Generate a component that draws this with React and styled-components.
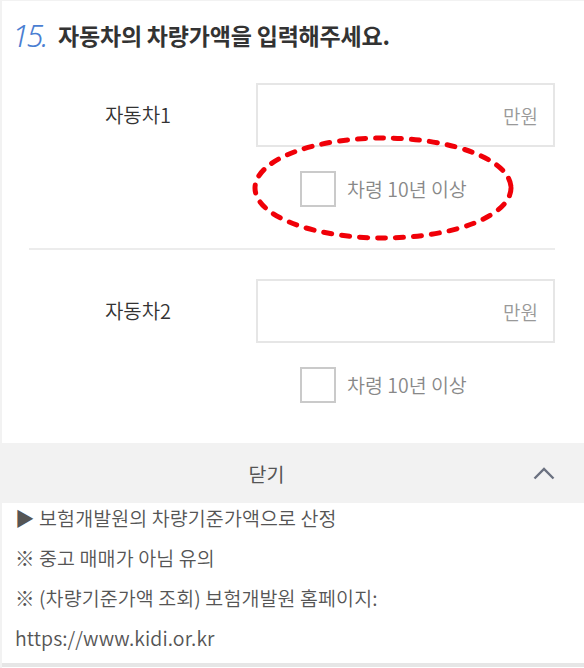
import React from "react";
import styled, { createGlobalStyle } from "styled-components";

const GlobalStyle = createGlobalStyle`
  html, body {
    margin: 0;
    padding: 0;
    background: #fff;
  }
  body {
    font-family: "Noto Sans CJK KR", "Noto Sans", sans-serif;
    color: #333;
  }
`;

const cars = [
  { id: 1, name: "자동차1", marked: true },
  { id: 2, name: "자동차2", marked: false },
];

const notes = [
  "▶ 보험개발원의 차량기준가액으로 산정",
  "※ 중고 매매가 아님 유의",
  "※ (차량기준가액 조회) 보험개발원 홈페이지:",
  "https://www.kidi.or.kr",
];

const CarPriceForm = () => {
  return (
    <Page>
      <Header>
        <Num>15.</Num>
        <Title>자동차의 차량가액을 입력해주세요.</Title>
      </Header>
      <Section>
        {cars.map((car, index) => (
          <React.Fragment key={car.id}>
            {index > 0 ? <Divider /> : null}
            <Field first={index === 0}>
              <Row>
                <Label>{car.name}</Label>
                <Input type="text" placeholder="만원" />
              </Row>
              <CheckRow>
                <Check type="checkbox" />
                <CheckText>차령 10년 이상</CheckText>
                {car.marked ? (
                  <Circle width="270" height="114" viewBox="0 0 270 114">
                    <ellipse cx="135" cy="57" rx="128" ry="50" />
                  </Circle>
                ) : null}
              </CheckRow>
            </Field>
          </React.Fragment>
        ))}
      </Section>
      <Bar>
        <BarText>닫기</BarText>
        <svg width="22" height="13" viewBox="0 0 22 13">
          <path d="M1.5 11.5 L11 2 L20.5 11.5" fill="none" stroke="#6b7180" strokeWidth="2.4" />
        </svg>
      </Bar>
      <Notes>
        {notes.map((text) => (
          <Note key={text}>{text}</Note>
        ))}
      </Notes>
      <Bottom />
    </Page>
  );
};

const Page = styled.div`
  width: 584px;
  min-height: 668px;
  box-sizing: border-box;
  border-top: 1px solid #f2f2f2;
  background: #fff;
  position: relative;
  &::before {
    content: "";
    position: absolute;
    left: 0;
    top: 0;
    bottom: 0;
    width: 2px;
    background: #f2f2f2;
  }
`;

const Header = styled.div`
  display: flex;
  align-items: center;
  height: 36px;
  padding: 16px 0 0 12px;
`;

const Num = styled.span`
  font-family: "Noto Sans", "Open Sans", sans-serif;
  font-style: italic;
  font-weight: 300;
  font-size: 31px;
  letter-spacing: -2.5px;
  line-height: 36px;
  color: #4a7ed2;
  width: 46px;
`;

const Title = styled.h1`
  margin: 0;
  font-size: 23px;
  font-weight: 700;
  line-height: 36px;
  color: #333;
  letter-spacing: -0.2px;
`;

const Section = styled.div`
  padding: 0 29px 0 29px;
`;

const Field = styled.div`
  padding-top: ${(props) => (props.first ? "30px" : "29px")};
`;

const Row = styled.div`
  display: flex;
  align-items: center;
`;

const Label = styled.div`
  width: 218px;
  margin-right: 9px;
  text-align: center;
  font-size: 20px;
  font-weight: 350;
  line-height: 28px;
  color: #333;
`;

const Input = styled.input`
  flex: 1;
  height: 64px;
  box-sizing: border-box;
  border: 2px solid #e6e6e6;
  padding: 0 15px;
  text-align: right;
  font-family: "Noto Sans CJK KR", "Noto Sans", sans-serif;
  font-size: 19px;
  font-weight: 350;
  color: #333;
  outline: none;
  &::placeholder {
    color: #999;
  }
`;

const CheckRow = styled.div`
  position: relative;
  display: flex;
  align-items: center;
  margin-top: 24px;
  padding-left: 271px;
  height: 36px;
`;

const Check = styled.input`
  appearance: none;
  margin: 0 11px 0 0;
  width: 36px;
  height: 36px;
  box-sizing: border-box;
  border: 2px solid #cacaca;
  background: #fff;
`;

const CheckText = styled.span`
  font-size: 19.5px;
  font-weight: 350;
  line-height: 28px;
  color: #888;
`;

const Circle = styled.svg`
  position: absolute;
  left: 219px;
  top: -40px;
  overflow: visible;
  ellipse {
    fill: none;
    stroke: #f00008;
    stroke-width: 5;
    stroke-linecap: round;
    stroke-dasharray: 8 10;
  }
`;

const Divider = styled.div`
  height: 2px;
  background: #ececec;
  margin-top: 41px;
`;

const Bar = styled.div`
  display: flex;
  align-items: center;
  height: 60px;
  margin-top: 40px;
  padding-right: 29px;
  background: #f2f2f2;
  svg {
    display: block;
  }
`;

const BarText = styled.div`
  flex: 1;
  text-align: center;
  font-size: 19.5px;
  font-weight: 400;
  color: #555;
`;

const Notes = styled.div`
  padding: 0 0 0 15px;
`;

const Note = styled.p`
  margin: 0 0 10px;
  font-size: 19.5px;
  font-weight: 350;
  line-height: 30px;
  color: #555;
  letter-spacing: 0.1px;
`;

const Bottom = styled.div`
  height: 4px;
  margin-top: 1px;
  background: #e6e6e6;
`;

export default function App() {
  return (
    <>
      <GlobalStyle />
      <CarPriceForm />
    </>
  );
}
